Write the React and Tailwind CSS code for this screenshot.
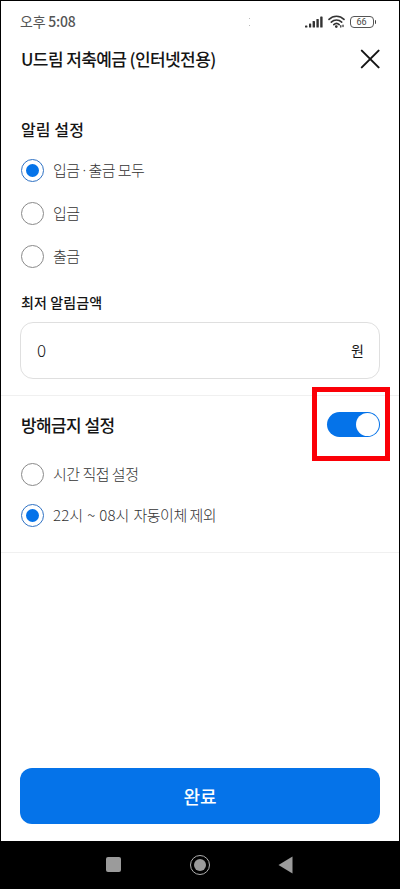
import React from "react";

function SignalIcon() {
  return (
    <svg width="18" height="12" viewBox="0 0 18 12" fill="#333">
      <rect x="0" y="9.5" width="2.4" height="2" rx="0.6" />
      <rect x="4" y="7.5" width="2.2" height="4" rx="0.6" />
      <rect x="7.6" y="5" width="2.4" height="6.5" rx="0.6" />
      <rect x="11.4" y="3" width="2.4" height="8.5" rx="0.6" />
      <rect x="15.2" y="0.5" width="2.4" height="11" rx="0.6" />
    </svg>
  );
}

function WifiIcon() {
  return (
    <svg
      width="17"
      height="13"
      viewBox="0 0 17 13"
      fill="none"
      stroke="#333"
      strokeWidth="1.6"
      strokeLinecap="round"
    >
      <path d="M1 4.4C5.2 0.2 11.8 0.2 16 4.4" />
      <path d="M3.3 7.1C6.3 4.2 10.7 4.2 13.7 7.1" />
      <path d="M5.8 9.6C7.4 8.1 9.6 8.1 11.2 9.6" />
      <circle cx="8.3" cy="11.6" r="0.6" fill="#333" />
      <path d="M12.8 10.6v1.4M15 10.2v1.4" strokeWidth="1.3" />
    </svg>
  );
}

function Battery({ level }) {
  return (
    <div className="flex items-center">
      <div className="flex h-[12px] w-[24px] items-center justify-center rounded-[4px] border border-[#555] pt-px font-['Roboto',sans-serif] text-[9px] leading-none text-[#444]">
        {level}
      </div>
      <div className="ml-px h-1 w-[1.5px] rounded-r bg-[#444]" />
    </div>
  );
}

function Radio({ children, checked, className = "" }) {
  return (
    <label className={`flex h-[23px] items-center pl-px ${className}`}>
      <span
        className={`flex size-[23px] shrink-0 items-center justify-center rounded-full border ${
          checked ? "border-[#2f72c4]" : "border-[#8a8a8a]"
        }`}
      >
        {checked && <span className="size-[13px] rounded-full bg-[#0573e9]" />}
      </span>
      <span className="ml-[9px] pb-[2px] text-[15px] leading-none font-light tracking-[-0.5px] whitespace-nowrap text-[#333]">
        {children}
      </span>
    </label>
  );
}

function App() {
  return (
    <div className="flex h-[889px] w-[400px] flex-col overflow-hidden border border-black bg-white font-['Noto_Sans_CJK_KR',sans-serif] text-[#151515]">
      <header className="px-[19px]">
        <div className="flex h-[41px] items-center justify-between pr-[4px]">
          <span className="pb-[2px] text-[14px] leading-none tracking-[-0.2px] text-[#555]">
            오후 <span className="font-medium">5:08</span>
          </span>
          <span className="mr-[55px] ml-auto flex flex-col gap-[6px]">
            <span className="size-px bg-[#bbb]" />
            <span className="size-px bg-[#bbb]" />
          </span>
          <div className="flex items-center gap-[5px]">
            <SignalIcon />
            <WifiIcon />
            <Battery level={66} />
          </div>
        </div>
        <div className="flex h-[34px] items-center justify-between">
          <h1 className="pb-[2px] pl-px text-[17px] leading-none font-medium tracking-[-0.6px] whitespace-nowrap">
            U드림 저축예금 (인터넷전용)
          </h1>
          <button aria-label="닫기">
            <svg
              width="20"
              height="20"
              viewBox="0 0 20 20"
              fill="none"
              stroke="#151515"
              strokeWidth="2"
              strokeLinecap="round"
            >
              <path d="M1.8 1.6l16.8 16.8M18.6 1.6L1.8 18.4" />
            </svg>
          </button>
        </div>
      </header>

      <section className="h-[320px] border-b border-[#f0f0f0] px-[19px] pt-[42px]">
        <h2 className="flex h-6 items-center pb-[2px] pl-px text-[16px] leading-none font-medium tracking-[0.1px]">
          알림 설정
        </h2>
        <Radio checked className="mt-[17px]">
          입금 <span className="font-['Noto_Sans',sans-serif]">·</span> 출금 모두
        </Radio>
        <Radio className="mt-5">입금</Radio>
        <Radio className="mt-5">출금</Radio>
        <h3 className="mt-[22px] flex h-6 items-center pl-px text-[14px] leading-none font-medium tracking-[0.1px]">
          최저 알림금액
        </h3>
        <div className="mt-2 flex h-[57px] items-center justify-between rounded-[13px] border border-[#dfdfdf] pr-[15px] pl-4 leading-none">
          <span className="pb-[2px] text-[17px] font-light">0</span>
          <span className="pb-px text-[14px]">원</span>
        </div>
      </section>

      <section className="relative h-[157px] border-b border-[#f0f0f0] px-[19px] pt-[15px]">
        <div className="flex h-[26px] items-center justify-between">
          <h2 className="pl-px text-[17px] leading-none font-medium tracking-[-0.6px]">
            방해금지 설정
          </h2>
          <div className="flex h-[25px] w-[53px] items-center justify-end rounded-full bg-[#0573e9] pr-px">
            <span className="size-[23px] rounded-full bg-white" />
          </div>
        </div>
        <Radio className="mt-[26px]">시간 직접 설정</Radio>
        <Radio checked className="mt-[18px]">
          <span className="tracking-[0.1px] [word-spacing:0.6px]">
            22시 ~ 08시{" "}
          </span>
          자동이체 제외
        </Radio>
        {/* highlight around the switch */}
        <div className="absolute top-[-9px] left-[311px] h-[74px] w-[78px] border-[5px] border-[#fb0007]" />
      </section>

      <div className="mt-auto px-[19px] pb-[17px]">
        <button className="flex h-[56px] w-full items-center justify-center rounded-[12px] bg-[#0573e9] text-[18px] leading-none font-medium text-white">
          완료
        </button>
      </div>

      <nav className="flex h-[47px] shrink-0 items-center justify-between bg-black pr-[106px] pl-[105px]">
        <span className="size-[15px] rounded-[2px] bg-[#9b9b9b]" />
        <span className="flex size-[20px] items-center justify-center rounded-full border-[1.5px] border-[#b0b0b0]">
          <span className="size-[12px] rounded-full bg-[#9b9b9b]" />
        </span>
        <svg width="15" height="18" viewBox="0 0 15 18" fill="#9b9b9b">
          <path d="M0.5 9L14.5 0.5v17z" />
        </svg>
      </nav>
    </div>
  );
}

export default App;
